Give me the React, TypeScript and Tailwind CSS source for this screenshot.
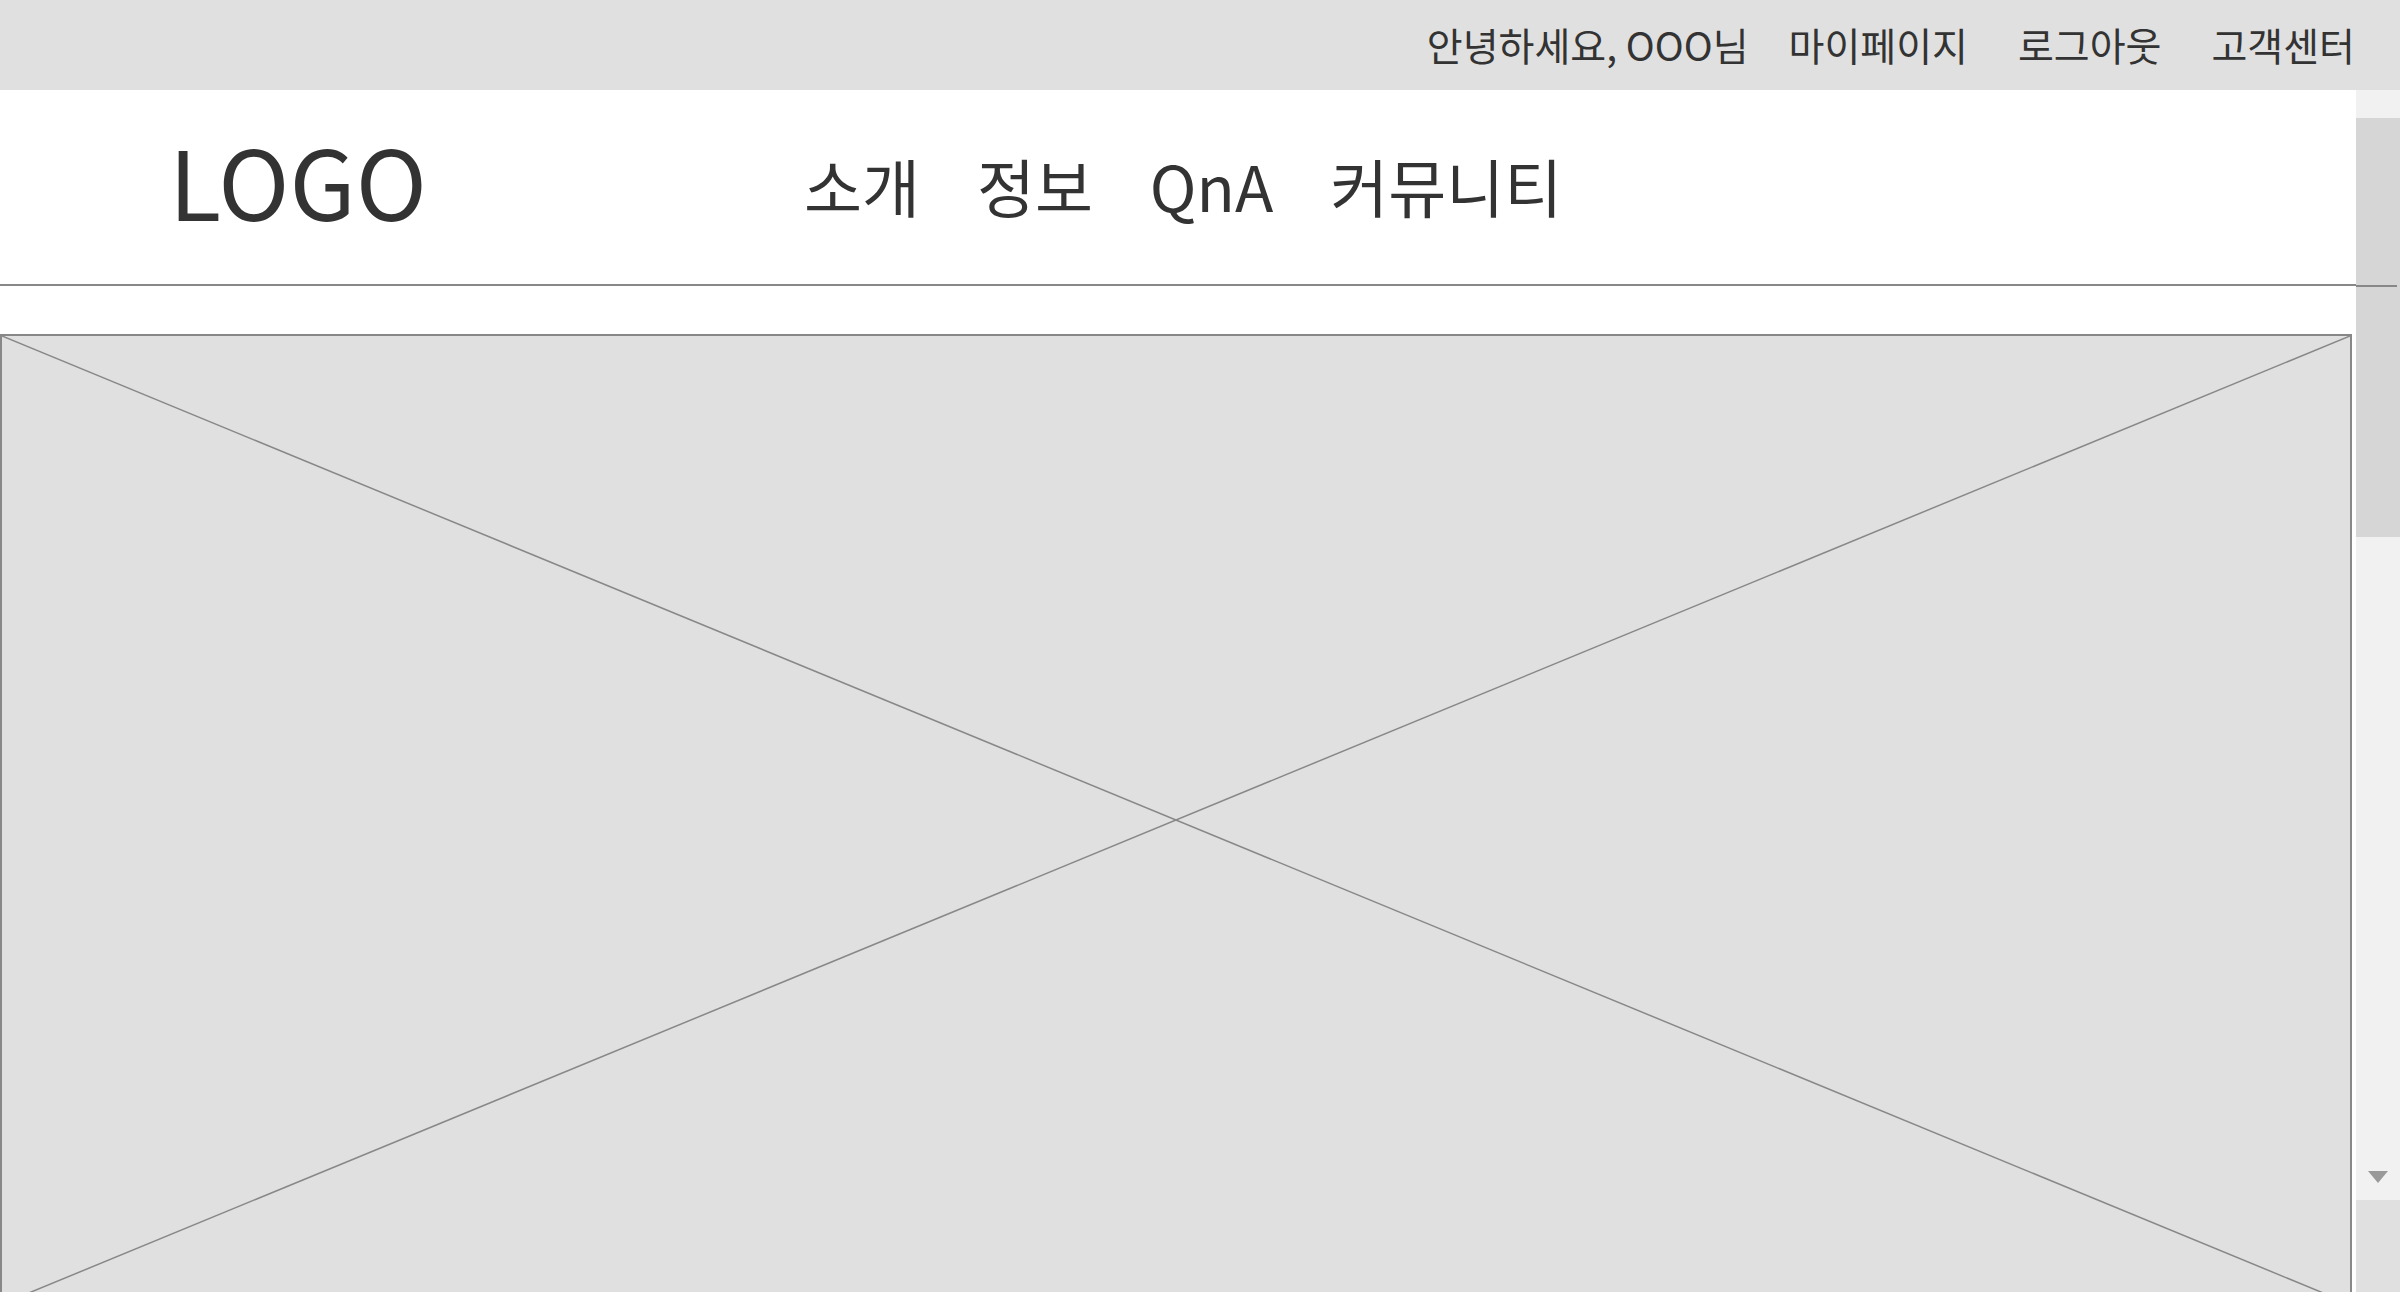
const UTIL_LINKS = ["마이페이지", "로그아웃", "고객센터"];
const NAV_ITEMS = ["소개", "정보", "QnA", "커뮤니티"];

function TopBar() {
  return (
    <div className="flex h-[90px] w-full shrink-0 items-center justify-end bg-[#e0e0e0] pb-[2px] pr-[45px] text-[39px] leading-none text-[#333]">
      <span className="mr-[40px]">안녕하세요, OOO님</span>
      <ul className="flex gap-[50px]">
        {UTIL_LINKS.map((label) => (
          <li key={label}>{label}</li>
        ))}
      </ul>
    </div>
  );
}

function Header() {
  return (
    <header className="flex h-[196px] shrink-0 items-center border-b-2 border-[#888] pl-[169px]">
      <div className="mb-[14px] w-[635px] text-[96px] leading-none text-[#333]">LOGO</div>
      <nav className="mb-[6px]">
        <ul className="flex gap-[57px] text-[63px] leading-none text-[#333]">
          {NAV_ITEMS.map((item) => (
            <li key={item}>{item}</li>
          ))}
        </ul>
      </nav>
    </header>
  );
}

// 이미지 자리 (와이어프레임 X 박스)
function ImagePlaceholder() {
  return (
    <div className="relative h-[972px] w-[2352px] shrink-0 border-2 border-[#888] bg-[#e0e0e0]">
      <svg className="absolute inset-0 h-full w-full" preserveAspectRatio="none" viewBox="0 0 100 100">
        <line x1="0" y1="0" x2="100" y2="100" stroke="#888" strokeWidth="1.5" vectorEffect="non-scaling-stroke" />
        <line x1="100" y1="0" x2="0" y2="100" stroke="#888" strokeWidth="1.5" vectorEffect="non-scaling-stroke" />
      </svg>
    </div>
  );
}

function FakeScrollbar() {
  return (
    <div className="relative flex h-[1110px] w-[44px] shrink-0 flex-col bg-[#f1f1f1]">
      <div className="h-[28px] shrink-0" />
      <div className="h-[419px] w-full shrink-0 bg-[#d6d6d6]" />
      <div className="flex-1" />
      <div className="flex h-[44px] shrink-0 items-center justify-center pb-[2px]">
        <svg width="20" height="12" viewBox="0 0 20 12">
          <polygon points="0,0 20,0 10,12" fill="#999" />
        </svg>
      </div>
      {/* 헤더 구분선이 스크롤바 위로 이어짐 */}
      <div className="absolute left-0 top-[195px] h-[2px] w-[41px] bg-[#888]" />
    </div>
  );
}

export default function App() {
  return (
    <div
      className="flex h-[1292px] w-[2400px] flex-col overflow-hidden bg-[#e0e0e0]"
      style={{fontFamily: '"Noto Sans CJK KR", "Noto Sans", sans-serif'}}
    >
      <TopBar />
      <div className="flex min-h-0 flex-1 items-start overflow-hidden">
        <main className="flex h-full w-[2356px] shrink-0 flex-col bg-white">
          <Header />
          <section className="shrink-0 pt-[48px]">
            <ImagePlaceholder />
          </section>
        </main>
        <FakeScrollbar />
      </div>
    </div>
  );
}
